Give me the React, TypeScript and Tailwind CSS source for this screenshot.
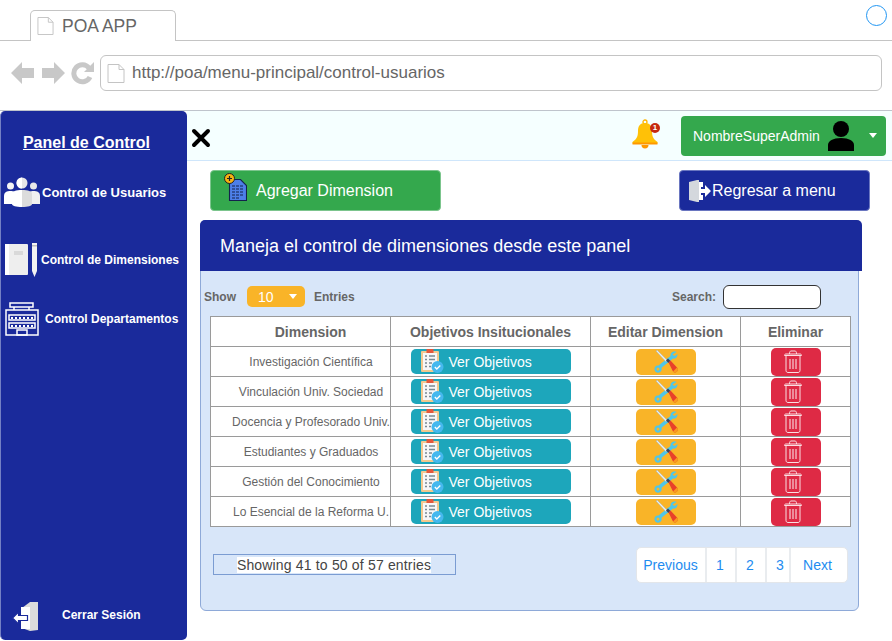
const rows = [
  "Investigación Científica",
  "Vinculación Univ. Sociedad",
  "Docencia y Profesorado Univ.",
  "Estudiantes y Graduados",
  "Gestión del Conocimiento",
  "Lo Esencial de la Reforma U.",
];

function PageIcon({ className }: { className: string }) {
  return (
    <svg viewBox="0 0 18 20" className={className} fill="#fff" stroke="#c4c4c4" strokeWidth="1">
      <path d="M1 1h11l5 5v13H1z" />
      <path d="M12 1v5h5" fill="none" />
    </svg>
  );
}

function UsersIcon() {
  return (
    <svg viewBox="0 0 36 32" className="h-8 w-9 shrink-0">
      <circle cx="6.500" cy="9" r="3.500" fill="#f4f4f4" />
      <circle cx="29.500" cy="9" r="3.500" fill="#e8e8e8" />
      <circle cx="18" cy="6" r="5.500" fill="#e6e6e6" />
      <path d="M18 .5a5.500 5.500 0 0 0 0 11z" fill="#fff" />
      <path d="M0 27v-8c0-4 3-5 6.500-5S10 15 10 15v12H3z" fill="#fff" />
      <path d="M36 27v-8c0-4-3-5-6.500-5S26 15 26 15v12h7z" fill="#f0f0f0" />
      <path d="M8 17c0-3 4-4 10-4v17c-6 0-10-1-10-3z" fill="#fff" />
      <path d="M28 17c0-3-4-4-10-4v17c6 0 10-1 10-3z" fill="#dcdcdc" />
    </svg>
  );
}

function NotebookIcon() {
  return (
    <svg viewBox="0 0 33 34" className="h-[34px] w-[33px] shrink-0">
      <rect x="0" y="1" width="23" height="31" rx="1" fill="#eeeeee" />
      <rect x="0" y="1" width="4" height="31" fill="#fff" />
      <rect x="9" y="8" width="9" height="4" fill="#d9d9d9" />
      <path d="M27 0h5v28l-2.500 6-2.500-6z" fill="#f2f2f2" />
      <rect x="27" y="2" width="5" height="1.500" fill="#bdbdbd" />
    </svg>
  );
}

function BuildingIcon() {
  return (
    <svg viewBox="0 0 34 34" className="h-[34px] w-[34px] shrink-0" fill="none" stroke="#fff" strokeWidth="1.500">
      <rect x="5" y="1" width="23" height="4" />
      <path d="M9 5v3M24 5v3" />
      <rect x="1" y="8" width="32" height="25" />
      <rect x="4" y="13" width="26" height="5" />
      <rect x="4" y="21" width="26" height="5" />
      <path d="M7 15v2M11 15v2M15 15v2M19 15v2M23 15v2M27 15v2M7 23v2M11 23v2M15 23v2M19 23v2M23 23v2M27 23v2" strokeWidth="2" />
      <rect x="12" y="28" width="10" height="5" />
    </svg>
  );
}

function LogoutIcon() {
  return (
    <svg viewBox="0 0 27 29" className="h-[29px] w-[27px] shrink-0">
      <path d="M10 6l8-6h8v28l-8 1-8-3z" fill="#dcdcdc" />
      <path d="M9 5h9v22H9z" fill="#fff" />
      <path d="M.5 16l6-6v3.500h9v5h-9V22z" fill="#fff" stroke="#1a2a9b" strokeWidth="1.200" />
    </svg>
  );
}

function Bell() {
  return (
    <div className="relative h-[30px] w-[28px]">
      <svg viewBox="0 0 28 30" className="h-[30px] w-[28px]">
        <circle cx="14" cy="3" r="2" fill="none" stroke="#ffb300" strokeWidth="1.300" />
        <path d="M14 4c-5 0-7 3-7 8 0 5-1 8-5.500 11v1.500h25V23C22 20 21 17 21 12c0-5-2-8-7-8z" fill="#ffc107" />
        <path d="M1.500 23.500h25v2h-25z" fill="#ff9800" />
        <path d="M10.500 26h7a3.500 3.500 0 0 1-7 0z" fill="#ff9800" />
      </svg>
      <span className="absolute right-[-1px] top-[4px] flex h-[10px] w-[10px] items-center justify-center rounded-full bg-[#c62a10] text-[8px] font-bold leading-none text-white">
        1
      </span>
    </div>
  );
}

function AddDocIcon() {
  return (
    <svg viewBox="0 0 24 28" className="mb-[8px] h-[28px] w-[24px] shrink-0">
      <path d="M6.500 6.500h11l6 6v15h-17z" fill="#4d7fe8" stroke="#14224d" strokeWidth="1.100" />
      <path d="M9 13h12M9 16h12M9 19h12M9 22h12M9 25h8" stroke="#14224d" strokeWidth="1" strokeDasharray="3 1" />
      <circle cx="6.500" cy="5.500" r="5" fill="#f5b311" stroke="#222" strokeWidth="1" />
      <path d="M4 5.500h5M6.500 3v5" stroke="#222" strokeWidth="1.200" />
    </svg>
  );
}

function ChecklistIcon() {
  return (
    <svg viewBox="0 0 23 25" className="h-[25px] w-[23px] shrink-0">
      <rect x="0" y="2" width="18" height="21" rx="1" fill="#f2c98f" />
      <rect x="2" y="4" width="14" height="17" fill="#f7f7f7" />
      <rect x="5.500" y="0" width="7" height="4" fill="#e2573d" />
      <path d="M4 7h2M8 7h6M4 10.500h2M8 10.500h6M4 14h2M8 14h3M4 17.500h2M8 17.500h2" stroke="#7b8a93" strokeWidth="1.300" />
      <circle cx="16.500" cy="18" r="6" fill="#45b8ee" />
      <path d="M13.800 18l2 2 3.500-3.500" fill="none" stroke="#fff" strokeWidth="1.300" />
    </svg>
  );
}

function ToolsIcon() {
  return (
    <svg viewBox="0 0 24 24" className="h-6 w-6">
      <path d="M22.500 2c-3-1.500-6.500.5-6 4L4.500 15.500c-2.500-.5-4.500 1.500-4 4.200.5 3 4 4 6 2 1.300-1.200 1.400-2.700 1-4L19 8.500c2.800.8 4.800-1.500 4.500-4.500l-3 2-2-1.500z" fill="#4fc6e8" />
      <circle cx="4" cy="19" r="1.500" fill="#f8b62a" />
      <path d="M2 1L3.200.3l10 10-1.200 1.400z" fill="#eef3f6" stroke="#9fb2bd" strokeWidth=".5" />
      <path d="M12 10.500l2-2 2.500 2.500-2 2z" fill="#39465f" />
      <path d="M14.500 12.500l2-2 6.500 7a2.800 2.800 0 0 1-4 4z" fill="#e8402a" />
      <path d="M19 21.500l4-4a2.800 2.800 0 0 1-4 4z" fill="#f79a1f" />
    </svg>
  );
}

function TrashIcon() {
  return (
    <svg viewBox="0 0 18 23" className="mr-[6px] h-[23px] w-[18px]" fill="none" stroke="#fff" strokeWidth="1" opacity=".85">
      <path d="M.5 5.500c0-1 .5-1.500 1.500-1.500h14c1 0 1.500.5 1.500 1.500z" />
      <path d="M5.500 4c0-2 .5-3 1.500-3h4c1 0 1.500 1 1.500 3" />
      <path d="M2 5.500v15c0 1 .7 2 2 2h10c1.300 0 2-1 2-2v-15" />
      <path d="M6 9v10M9 9v10M12 9v10" strokeWidth="1.100" />
    </svg>
  );
}

export default function App() {
  return (
    <div className="flex h-[641px] w-[892px] flex-col overflow-hidden bg-white font-['Liberation_Sans',Arial,sans-serif]">
      {/* browser chrome */}
      <div className="relative h-[41px] border-b border-[#c4c4c4] pl-[30px] pt-[10px]">
        <div className="flex h-[31px] w-[146px] items-start gap-[8px] rounded-t-[5px] border border-b-0 border-[#c4c4c4] bg-white pl-[6px] pt-[5px]">
          <PageIcon className="h-[20px] w-[17px]" />
          <span className="text-[17.500px] leading-5 text-[#666]">POA APP</span>
        </div>
        <div className="absolute right-[5px] top-[5px] h-[21px] w-[21px] rounded-full border border-[#2196f3]" />
      </div>
      <div className="flex h-[70px] items-start border-b border-[#bfc4cc] pl-[11px] pt-[14px]">
        <div className="mt-[6px] flex items-center gap-[6px] text-[#c4c4c4]">
          <svg viewBox="0 0 24 24" className="h-6 w-6" fill="#c8c8c8"><path d="M0 12L11 1v6h12v10H11v6z" /></svg>
          <svg viewBox="0 0 24 24" className="h-6 w-6" fill="#c8c8c8"><path d="M24 12L13 1v6H1v10h12v6z" /></svg>
          <svg viewBox="0 0 24 24" className="h-6 w-6" fill="none" stroke="#c8c8c8" strokeWidth="5">
            <path d="M19 16a8.500 8.500 0 1 1-1-9" />
            <path d="M23 1v10H13z" fill="#c8c8c8" stroke="none" />
          </svg>
        </div>
        <div className="ml-[5px] flex h-[36px] w-[782px] items-center gap-[7px] rounded-[6px] border border-[#c4c4c4] pl-[6px]">
          <PageIcon className="h-[21px] w-[18px]" />
          <span className="text-[17px] text-[#666]">http://poa/menu-principal/control-usuarios</span>
        </div>
      </div>

      <div className="flex min-h-0 flex-1">
        {/* sidebar */}
        <aside className="flex h-[529px] w-[187px] shrink-0 flex-col rounded-[5px] border-l border-[#7480c4] bg-[#1a2a9b] text-white">
          <div className="mt-[22px] pr-[15px] text-center text-base font-bold leading-5 underline">Panel de Control</div>
          <div className="mt-[24px] flex items-center gap-[2px] pl-[3px]">
            <UsersIcon />
            <span className="text-[13px] font-bold">Control de Usuarios</span>
          </div>
          <div className="mt-[34px] flex items-center gap-[3px] pl-[4px]">
            <NotebookIcon />
            <span className="text-xs font-bold">Control de Dimensiones</span>
          </div>
          <div className="mt-[25px] flex items-center gap-[6px] pl-[4px]">
            <BuildingIcon />
            <span className="text-xs font-bold">Control Departamentos</span>
          </div>
          <div className="mb-[9px] mt-auto flex items-center gap-[23px] pl-[11px]">
            <LogoutIcon />
            <span className="mb-[4px] text-xs font-bold">Cerrar Sesión</span>
          </div>
        </aside>

        {/* main */}
        <main className="min-w-0 flex-1">
          <div className="flex h-[50px] items-center border-b border-[#cfe6fb] bg-[#f5ffff] pl-[4px] pr-[6px]">
            <svg viewBox="0 0 20 20" className="mt-[4px] h-5 w-5" stroke="#000" strokeWidth="4" strokeLinecap="round">
              <path d="M3 3l14 14M17 3L3 17" />
            </svg>
            <div className="mb-[3px] ml-auto mr-[22px]"><Bell /></div>
            <div className="flex h-[40px] w-[205px] items-center rounded-[4px] bg-[#34a84d] pl-[12px] text-white">
              <span className="text-sm">NombreSuperAdmin</span>
              <svg viewBox="0 0 26 30" className="ml-[8px] h-[30px] w-[26px]" fill="#000">
                <circle cx="13" cy="8" r="8" />
                <path d="M0 30v-6c0-4 5-7 13-7s13 3 13 7v6z" />
              </svg>
              <span className="ml-[15px] h-0 w-0 border-x-[4.500px] border-t-[5px] border-x-transparent border-t-white" />
            </div>
          </div>

          <div className="flex items-start justify-between pl-[23px] pr-[22px] pt-[9px]">
            <div className="flex h-[41px] w-[231px] items-center gap-[9px] rounded-[4px] border border-[#7cc58d] bg-[#34a84d] pl-[12px] text-white">
              <AddDocIcon />
              <span className="text-base">Agregar Dimension</span>
            </div>
            <div className="flex h-[41px] w-[191px] items-center rounded-[4px] border border-[#6a76c0] bg-[#1a2a9b] pl-[8px] text-white">
              <svg viewBox="0 0 24 24" className="h-6 w-6 shrink-0">
                <path d="M1 3l8-2h2v22H9l-8-2z" fill="#d4d8dd" />
                <path d="M11 3h4v5h-2v8h2v5h-4z" fill="#fff" />
                <path d="M12 10h5V6l6 6-6 6v-4h-5z" fill="#fff" />
              </svg>
              <span className="text-base">Regresar a menu</span>
            </div>
          </div>

          {/* panel */}
          <div className="ml-[13px] mt-[9px] h-[391px] w-[659px] rounded-[6px] border border-[#8ea9d8] bg-[#d8e6f9]">
            <div className="-ml-px -mt-px flex h-[51px] w-[662px] items-center rounded-t-[5px] bg-[#1a2a9b] pl-[20px] text-white">
              <span className="text-lg">Maneja el control de dimensiones desde este panel</span>
            </div>
            <div className="flex h-[45px] items-center pl-[3px] pr-[37px] pt-[6px] text-xs font-bold text-[#666]">
              <span>Show</span>
              <div className="ml-[11px] flex h-[21px] w-[58px] items-center rounded-[5px] bg-[#f9b428] pl-[11px] text-sm font-normal text-white">
                10
                <span className="ml-[15px] h-0 w-0 border-x-[4.500px] border-t-[5px] border-x-transparent border-t-white" />
              </div>
              <span className="ml-[9px]">Entries</span>
              <span className="ml-auto">Search:</span>
              <div className="ml-[7px] h-[24px] w-[98px] rounded-[6px] border border-[#333] bg-white" />
            </div>
            <div className="ml-[9px] w-[641px] bg-white">
              <div className="grid h-[31px] grid-cols-[179px_200px_150px_110px] border border-[#9a9a9a] text-sm font-bold text-[#666]">
                <div className="flex items-center justify-center pl-[20px] pt-[1px]">Dimension</div>
                <div className="flex items-center justify-center border-l border-[#9a9a9a] pt-[1px]">Objetivos Insitucionales</div>
                <div className="flex items-center justify-center border-l border-[#9a9a9a] pt-[1px]">Editar Dimension</div>
                <div className="flex items-center justify-center border-l border-[#9a9a9a] pt-[1px]">Eliminar</div>
              </div>
              {rows.map((r) => (
                <div key={r} className="grid h-[30px] grid-cols-[179px_200px_150px_110px] border-x border-b border-[#9a9a9a] text-xs text-[#666]">
                  <div className="flex items-center justify-end">
                    <span className="w-[158px] whitespace-nowrap text-center">{r}</span>
                  </div>
                  <div className="flex items-center justify-center border-l border-[#9a9a9a]">
                    <div className="flex h-[25px] w-[160px] items-center gap-[5px] rounded-[5px] bg-[#1da6bb] pl-[10px] text-sm text-white">
                      <ChecklistIcon />
                      <span>Ver Objetivos</span>
                    </div>
                  </div>
                  <div className="flex items-center justify-center border-l border-[#9a9a9a]">
                    <div className="flex h-[26px] w-[60px] items-center justify-center rounded-[5px] bg-[#f9b428]">
                      <ToolsIcon />
                    </div>
                  </div>
                  <div className="flex items-center justify-center border-l border-[#9a9a9a]">
                    <div className="flex h-[28px] w-[50px] items-center justify-center rounded-[5px] bg-[#de2a45]">
                      <TrashIcon />
                    </div>
                  </div>
                </div>
              ))}
            </div>
            <div className="flex items-start pl-[12px] pr-[10px] pt-[19px]">
              <div className="mt-[8px] flex h-[21px] w-[243px] items-center justify-center border border-[#7b9cd2] pr-[1px]">
                <span className="bg-white text-sm leading-4 tracking-[.17px] text-[#444]">Showing 41 to 50 of 57 entries</span>
              </div>
              <div className="ml-auto mt-[1px] flex h-[36px] items-stretch overflow-hidden rounded-[5px] border border-[#e3e6ea] bg-white text-sm text-[#1e8cf0]">
                <div className="flex w-[68px] items-center justify-center pr-[1px]">Previous</div>
                <div className="flex w-[30px] items-center justify-center border-l-2 border-[#e9ecef] pr-[2px]">1</div>
                <div className="flex w-[30px] items-center justify-center border-l-2 border-[#e9ecef] pr-[2px]">2</div>
                <div className="flex w-[24px] items-center justify-center border-l-2 border-[#e9ecef] pl-[4px]">3</div>
                <div className="flex w-[58px] items-center justify-center border-l-2 border-[#e9ecef] pr-[3px]">Next</div>
              </div>
            </div>
          </div>
        </main>
      </div>
    </div>
  );
}
